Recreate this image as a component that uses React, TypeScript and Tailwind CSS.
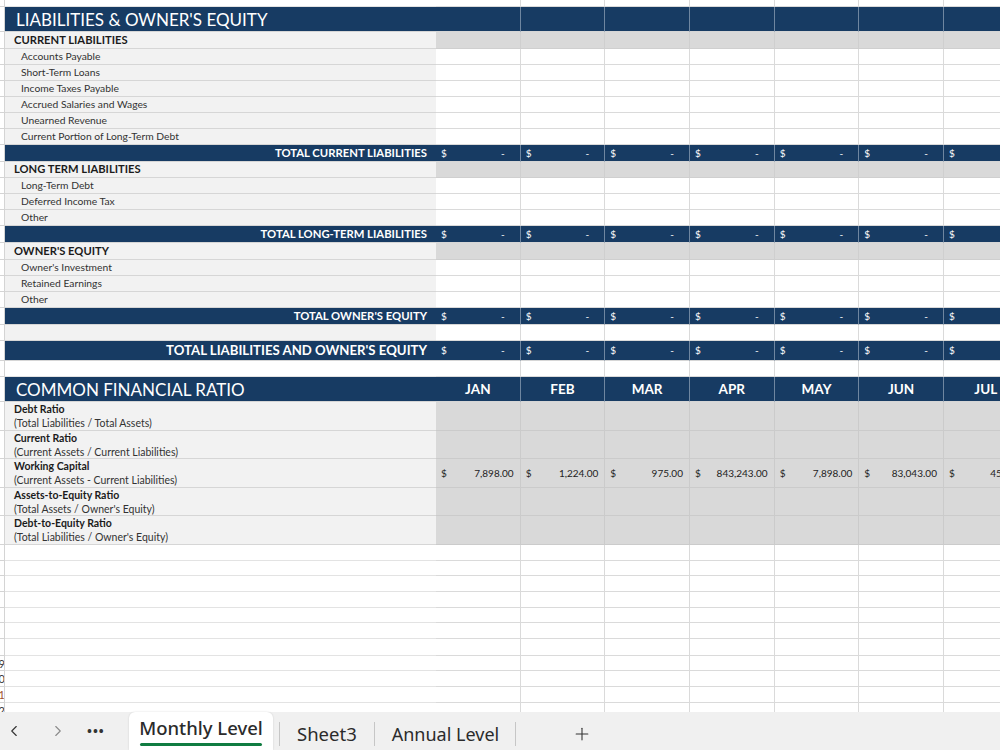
import { ChevronLeft, ChevronRight, Plus } from "lucide-react";

const BLUE = "bg-[#173b63]";

type Kind = "top" | "title" | "section" | "item" | "total" | "blank" | "white" | "grand" | "ratioHead" | "ratio";

type Row = {
  kind: Kind;
  h: string;
  label?: string;
  sub?: string;
  values?: string[];
};

const months = ["JAN", "FEB", "MAR", "APR", "MAY", "JUN", "JUL"];
const working = ["7,898.00", "1,224.00", "975.00", "843,243.00", "7,898.00", "83,043.00", "456.00"];

const rows: Row[] = [
  { kind: "top", h: "h-[7px]" },
  { kind: "title", h: "h-[25px]", label: "LIABILITIES & OWNER'S EQUITY" },
  { kind: "section", h: "h-[17px]", label: "CURRENT LIABILITIES" },
  { kind: "item", h: "h-[16px]", label: "Accounts Payable" },
  { kind: "item", h: "h-[16px]", label: "Short-Term Loans" },
  { kind: "item", h: "h-[16px]", label: "Income Taxes Payable" },
  { kind: "item", h: "h-[16px]", label: "Accrued Salaries and Wages" },
  { kind: "item", h: "h-[16px]", label: "Unearned Revenue" },
  { kind: "item", h: "h-[16px]", label: "Current Portion of Long-Term Debt" },
  { kind: "total", h: "h-[17px]", label: "TOTAL CURRENT LIABILITIES" },
  { kind: "section", h: "h-[16px]", label: "LONG TERM LIABILITIES" },
  { kind: "item", h: "h-[16px]", label: "Long-Term Debt" },
  { kind: "item", h: "h-[16px]", label: "Deferred Income Tax" },
  { kind: "item", h: "h-[16px]", label: "Other" },
  { kind: "total", h: "h-[17px]", label: "TOTAL LONG-TERM LIABILITIES" },
  { kind: "section", h: "h-[17px]", label: "OWNER'S EQUITY" },
  { kind: "item", h: "h-[16px]", label: "Owner's Investment" },
  { kind: "item", h: "h-[16px]", label: "Retained Earnings" },
  { kind: "item", h: "h-[16px]", label: "Other" },
  { kind: "total", h: "h-[17px]", label: "TOTAL OWNER'S EQUITY" },
  { kind: "blank", h: "h-[16px]" },
  { kind: "grand", h: "h-[20px]", label: "TOTAL LIABILITIES AND OWNER'S EQUITY" },
  { kind: "white", h: "h-[16px]" },
  { kind: "ratioHead", h: "h-[25px]", label: "COMMON FINANCIAL RATIO" },
  { kind: "ratio", h: "h-[29px]", label: "Debt Ratio", sub: "(Total Liabilities / Total Assets)" },
  { kind: "ratio", h: "h-[28px]", label: "Current Ratio", sub: "(Current Assets / Current Liabilities)" },
  { kind: "ratio", h: "h-[29px]", label: "Working Capital", sub: "(Current Assets - Current Liabilities)", values: working },
  { kind: "ratio", h: "h-[28px]", label: "Assets-to-Equity Ratio", sub: "(Total Assets / Owner's Equity)" },
  { kind: "ratio", h: "h-[29px]", label: "Debt-to-Equity Ratio", sub: "(Total Liabilities / Owner's Equity)" },
  { kind: "white", h: "h-[16px]" },
  { kind: "white", h: "h-[15px]" },
  { kind: "white", h: "h-[16px]" },
  { kind: "white", h: "h-[16px]" },
  { kind: "white", h: "h-[15px]" },
  { kind: "white", h: "h-[16px]" },
  { kind: "white", h: "h-[17px]" },
  { kind: "white", h: "h-[15px]" },
  { kind: "white", h: "h-[16px]" },
  { kind: "white", h: "h-[16px]" },
  { kind: "white", h: "h-[16px]" },
];

function LabelCell({ row }: { row: Row }) {
  const base = "w-[431px] shrink-0 flex items-center overflow-hidden border-b whitespace-nowrap";
  switch (row.kind) {
    case "top":
    case "white":
      return <div className={`${base} bg-white border-[#e3e3e3]`} />;
    case "blank":
      return <div className={`${base} bg-[#f2f2f2] border-[#d6d6d6]`} />;
    case "title":
    case "ratioHead":
      return (
        <div className={`${base} ${BLUE} border-[#d6d6d6] pl-[11px] text-[17px] text-white leading-none`}>
          {row.label}
        </div>
      );
    case "section":
      return (
        <div className={`${base} bg-[#f2f2f2] border-[#d6d6d6] pl-[9px] text-[11.2px] font-bold text-[#1b1b1b]`}>
          {row.label}
        </div>
      );
    case "item":
      return (
        <div className={`${base} bg-[#f2f2f2] border-[#d6d6d6] pl-[16px] text-[10.3px] text-[#333]`}>
          {row.label}
        </div>
      );
    case "total":
      return (
        <div className={`${base} ${BLUE} border-[#d6d6d6] justify-end pr-[9px] text-[11.3px] font-bold text-white`}>
          {row.label}
        </div>
      );
    case "grand":
      return (
        <div className={`${base} ${BLUE} border-[#d6d6d6] justify-end pr-[9px] text-[13.2px] font-bold text-white`}>
          {row.label}
        </div>
      );
    case "ratio":
      return (
        <div className={`${base} bg-[#f2f2f2] border-[#d6d6d6] pl-[9px] flex-col !items-start justify-center text-[10.5px] leading-[14px] text-[#1b1b1b]`}>
          <span className="font-bold">{row.label}</span>
          <span className="text-[#333]">{row.sub}</span>
        </div>
      );
  }
}

function MonthCell({ row, i }: { row: Row; i: number }) {
  const base = "w-[84.67px] shrink-0 flex items-center overflow-hidden border-b border-r whitespace-nowrap";
  switch (row.kind) {
    case "top":
    case "white":
    case "blank":
    case "item":
      return <div className={`${base} bg-white border-[#dadada]`} />;
    case "title":
      return <div className={`${base} ${BLUE} border-b-[#d6d6d6] border-r-[#6f86a0]`} />;
    case "section":
      return <div className={`${base} bg-[#d9d9d9] border-[#cfcfcf]`} />;
    case "ratioHead":
      return (
        <div className={`${base} ${BLUE} border-b-[#d6d6d6] border-r-[#6f86a0] justify-center text-[13.5px] font-bold text-white`}>
          {months[i]}
        </div>
      );
    case "total":
    case "grand":
      return (
        <div
          className={`${base} ${BLUE} border-b-[#d6d6d6] border-r-[#6f86a0] justify-between pl-[5px] pr-[15px] text-[10px] text-white`}
        >
          <span>$</span>
          <span>-</span>
        </div>
      );
    case "ratio":
      return (
        <div className={`${base} bg-[#d9d9d9] border-[#cbcbcb] justify-between pl-[5px] pr-[6px] text-[10px] text-[#222]`}>
          {row.values && (
            <>
              <span>$</span>
              <span>{row.values[i]}</span>
            </>
          )}
        </div>
      );
  }
}

function SheetRow({ row, idx }: { row: Row; idx: number }) {
  // only the last few row numbers peek out of the clipped header column
  const n = idx + 3;
  const tone = n === 41 ? "text-[#a0522d]" : "text-[#3a3a3a]";
  return (
    <div className={`flex ${row.h}`}>
      <div className="w-[5px] shrink-0 overflow-hidden border-r border-b border-[#d4d4d4] bg-white flex items-center justify-end leading-none">
        {idx >= 36 && <span className={`text-[11px] -mr-[1px] ${tone}`}>{n % 10}</span>}
      </div>
      <LabelCell row={row} />
      {months.map((m, i) => (
        <MonthCell key={m} row={row} i={i} />
      ))}
    </div>
  );
}

function TabBar() {
  return (
    <div className="h-[38px] shrink-0 bg-[#f0f0f0] flex items-stretch font-['Noto_Sans',sans-serif] text-[#2b2b2b]">
      <div className="w-[129px] flex items-center">
        <ChevronLeft className="ml-[5px] size-[18px] text-[#333]" strokeWidth={1.5} />
        <ChevronRight className="ml-[26px] size-[18px] text-[#8a8a8a]" strokeWidth={1.5} />
        <span className="ml-[20px] text-[13px] tracking-[1px] text-[#333] font-bold leading-none">•••</span>
      </div>
      <div className="w-[144px] bg-white rounded-t-[6px] shadow-[0_0_2px_rgba(0,0,0,0.15)] flex flex-col items-center justify-center">
        <span className="text-[18.5px] leading-none font-medium pt-[3px]">Monthly Level</span>
        <span className="mt-[6px] h-[3px] w-[122px] bg-[#107c41] rounded-full" />
      </div>
      <div className="flex items-center pt-[6px]">
        <span className="ml-[6px] h-[24px] w-px bg-[#c6c6c6]" />
        <span className="ml-[17px] text-[18.5px] leading-none">Sheet3</span>
        <span className="ml-[17px] h-[24px] w-px bg-[#c6c6c6]" />
        <span className="ml-[17px] text-[18px] leading-none">Annual Level</span>
        <span className="ml-[16px] h-[24px] w-px bg-[#c6c6c6]" />
        <Plus className="ml-[56px] size-[20px] text-[#333]" strokeWidth={1.3} />
      </div>
    </div>
  );
}

export default function App() {
  return (
    <div className="w-[1000px] h-[750px] overflow-hidden flex flex-col bg-white font-['Lato',sans-serif]">
      <div className="flex-1 overflow-hidden">
        {rows.map((r, idx) => (
          <SheetRow key={idx} row={r} idx={idx} />
        ))}
      </div>
      <TabBar />
    </div>
  );
}
